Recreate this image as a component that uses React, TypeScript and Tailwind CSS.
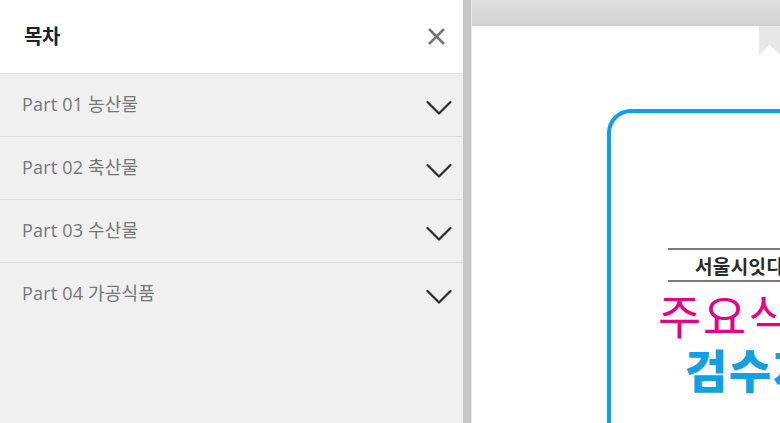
import React from "react";
import { X } from "lucide-react";

const parts = [
  "Part 01 농산물",
  "Part 02 축산물",
  "Part 03 수산물",
  "Part 04 가공식품",
];

const font = { fontFamily: '"Open Sans", "Noto Sans CJK KR", sans-serif' };
const kr = { fontFamily: '"Noto Sans CJK KR", sans-serif' };

function Chevron() {
  return (
    <svg width="26" height="16" viewBox="0 0 26 16" fill="none">
      <polyline
        points="1.5,2 13,13.5 24.5,2"
        stroke="#2b2b2b"
        strokeWidth="2.2"
        strokeLinecap="round"
        strokeLinejoin="round"
      />
    </svg>
  );
}

export default function App() {
  return (
    <div className="w-[780px] h-[423px] flex overflow-hidden bg-[#d9d9d9]" style={font}>
      {/* table of contents */}
      <aside className="w-[463px] h-full flex flex-col bg-[#f0f0f0] shrink-0">
        <div className="h-[73px] bg-white flex items-center justify-between pl-6 pr-[13px] border-b border-[#dddddd] box-content">
          <h1 className="text-[20px] font-bold text-[#222] tracking-tight">목차</h1>
          <X className="w-[27px] h-[27px] text-[#777]" strokeWidth={2.3} />
        </div>
        <ul>
          {parts.map((p, i) => (
            <li
              key={p}
              className={
                "h-[62px] flex items-center justify-between pl-[22px] pr-[11px] box-content " +
                (i < parts.length - 1 ? "border-b border-[#dcdcdc]" : "")
              }
            >
              <span className="text-[18px] text-[#777] tracking-[0.01em] pb-[1px]">{p}</span>
              <span className="pt-[6px]">
                <Chevron />
              </span>
            </li>
          ))}
        </ul>
      </aside>

      <div className="w-[9px] h-full bg-[#c6c6c6] border-r border-[#e6e6e6] shrink-0" />

      {/* document viewer */}
      <main className="flex-1 h-full flex flex-col overflow-hidden">
        <div className="h-[26px] shrink-0 bg-gradient-to-b from-[#e2e2e2] to-[#d0d0d0]" />
        <div className="flex-1 bg-white relative pl-[135px] pt-[83px] overflow-hidden">
          <div className="absolute top-0 right-0 w-[21px] h-[29px] bg-[#e8e8e8] [clip-path:polygon(0_0,100%_0,100%_100%,50%_65%,0_100%)]" />
          <div className="w-[420px] h-[400px] border-[4px] border-[#0aa1e6] rounded-[24px] pl-[57px] pt-[135px]">
            <div className="border-t-2 border-b-2 border-[#7a7a7a] h-[34px] flex items-center pl-[27px] w-[220px]">
              <span className="whitespace-nowrap text-[19px] font-bold text-[#2a2a2a] tracking-[0.02em] leading-none" style={kr}>
                서울시잇다 식품
              </span>
            </div>
            <div
              className="whitespace-nowrap -ml-[10px] mt-[4px] text-[47px] leading-[56px] text-[#e4007f] tracking-[0.04em]"
              style={kr}
            >
              주요식품
            </div>
            <div
              className="whitespace-nowrap ml-[17px] text-[46px] leading-[52px] font-black text-[#10a0e3] tracking-[0.03em]"
              style={kr}
            >
              검수지침
            </div>
          </div>
        </div>
      </main>
    </div>
  );
}
